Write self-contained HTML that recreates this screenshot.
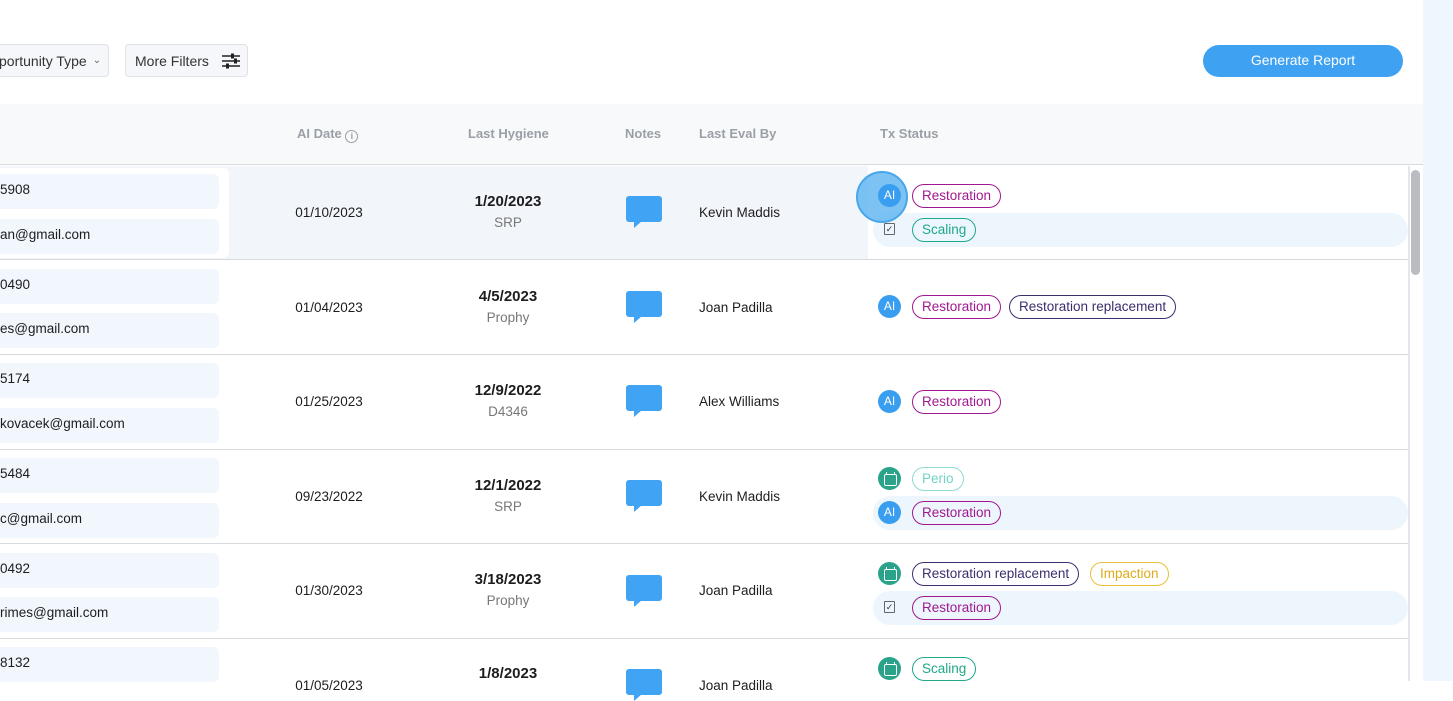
<!DOCTYPE html>
<html><head><style>
*{margin:0;padding:0;box-sizing:border-box}
body{width:1453px;height:681px;overflow:hidden;background:#fff;font-family:"Liberation Sans",sans-serif;color:#1d1d1f;position:relative}
.a{position:absolute}
.side{left:1423px;top:0;width:30px;height:681px;background:#f0f6fd}
.btn{border:1px solid #dfe3e8;border-radius:4px;background:#f5f7fa;font-size:14px;color:#333;display:flex;align-items:center}
.hdr{left:0;top:104px;width:1423px;height:61px;background:#f7f9fb;border-bottom:1px solid #d6d9dd}
.th{font-size:13px;color:#9aa0a6;font-weight:bold;top:126px}
.line{left:0;width:1408px;height:1px;background:#d6d9dd}
.cell{left:0;width:219px;height:35px;background:#f1f7fd;border-radius:0 6px 6px 0;font-size:13.5px;padding:8px 0 0 0}
.td{font-size:13.5px}
.c{text-align:center;width:120px}
.bold{font-weight:bold;font-size:15px}
.sub{font-size:13.5px;color:#777}
.pill{height:24px;border-radius:12px;border:1px solid;font-size:13.5px;padding:0 9px;line-height:22px;white-space:nowrap}
.res{color:#a0188f;border-color:#a0188f}
.rr{color:#3d2e6e;border-color:#3d2e6e}
.sc{color:#1fa88a;border-color:#1fa88a}
.pe{color:#6fd4c4;border-color:#8ddcd0}
.im{color:#e0aa1a;border-color:#e8bf3a}
.ai{width:23px;height:23px;border-radius:50%;background:#3a9ef0;color:#fff;font-size:12px;text-align:center;line-height:23px}
.cal{width:23px;height:23px;border-radius:50%;background:#2aa38a}
.cal:before{content:"";position:absolute;left:6px;top:7px;width:11px;height:10px;border:1.5px solid #fff;border-radius:2px}
.cal:after{content:"";position:absolute;left:8px;top:5px;width:7px;height:3px;border-left:1.5px solid #fff;border-right:1.5px solid #fff}
.chk{width:11px;height:12px;border:1px solid #666;border-radius:1px;font-size:9px;line-height:10px;text-align:center;color:#333}
.band{height:34px;background:#eef6fd;border-radius:17px}
.note{width:36px;height:26px;background:#40a3f4;border-radius:3px}
.note:after{content:"";position:absolute;left:8px;top:25px;border-left:0 solid transparent;border-right:8px solid transparent;border-top:7px solid #40a3f4}
</style></head><body>
<div class="a side"></div>
<div class="a btn" style="left:-2px;top:44px;width:111px;height:33px;padding-left:0">portunity Type <span style="font-size:10px;margin-left:6px;color:#666">&#8964;</span></div>
<div class="a btn" style="left:125px;top:44px;width:123px;height:33px;padding-left:9px">More Filters
<svg width="20" height="16" style="margin-left:12px" viewBox="0 0 20 16"><g stroke="#222" stroke-width="1.5"><line x1="1" y1="3" x2="19" y2="3"/><line x1="1" y1="8" x2="19" y2="8"/><line x1="1" y1="13" x2="19" y2="13"/></g><g fill="#222"><rect x="10" y="0.5" width="3" height="5"/><rect x="13" y="5.5" width="3" height="5"/><rect x="5" y="10.5" width="3" height="5"/></g></svg></div>
<div class="a" style="left:1203px;top:45px;width:200px;height:32px;border-radius:16px;background:#3ea1f2;color:#fff;font-size:14px;text-align:center;line-height:31px">Generate Report</div>
<div class="a hdr"></div>
<div class="a th" style="left:297px">AI Date <span style="display:inline-block;width:13px;height:13px;border:1px solid #9aa0a6;border-radius:50%;font-size:9px;text-align:center;line-height:11px;vertical-align:-1px">i</span></div>
<div class="a th" style="left:468px">Last Hygiene</div>
<div class="a th" style="left:625px">Notes</div>
<div class="a th" style="left:699px">Last Eval By</div>
<div class="a th" style="left:880px">Tx Status</div>
<div class="a" style="left:0;top:166px;width:868px;height:93px;background:#f2f6fa"></div>
<div class="a" style="left:0;top:168px;width:229px;height:90px;background:#fff;border-radius:0 6px 6px 0"></div>
<div class="a" style="left:1408px;top:166px;width:2px;height:515px;background:#e3e6ea"></div>
<div class="a" style="left:1411px;top:170px;width:9px;height:105px;background:#b9bcc0;border-radius:5px"></div>
<div class="a line" style="top:259px"></div><div class="a line" style="top:354px"></div><div class="a line" style="top:449px"></div><div class="a line" style="top:543px"></div><div class="a line" style="top:638px"></div>

<div class="a cell" style="top:174px">5908</div><div class="a cell" style="top:219px">an@gmail.com</div>
<div class="a td c" style="left:269px;top:205px">01/10/2023</div>
<div class="a c" style="left:448px;top:193px"><div class="bold">1/20/2023</div><div class="sub" style="margin-top:5px">SRP</div></div>
<div class="a note" style="left:626px;top:196px"></div>
<div class="a td" style="left:699px;top:205px">Kevin Maddis</div>
<div class="a band" style="left:873px;top:213px;width:535px"></div>
<div class="a" style="left:856px;top:171px;width:52px;height:52px;border-radius:50%;background:rgba(80,175,240,.75);border:2px solid #48a6ea"></div>
<div class="a ai" style="left:878px;top:184px;background:#3a9ef0">AI</div>
<div class="a pill res" style="left:912px;top:184px">Restoration</div>
<div class="a chk" style="left:884px;top:223px">&#10003;</div>
<div class="a pill sc" style="left:912px;top:218px">Scaling</div>

<div class="a cell" style="top:269px">0490</div><div class="a cell" style="top:313px">es@gmail.com</div>
<div class="a td c" style="left:269px;top:300px">01/04/2023</div>
<div class="a c" style="left:448px;top:288px"><div class="bold">4/5/2023</div><div class="sub" style="margin-top:5px">Prophy</div></div>
<div class="a note" style="left:626px;top:291px"></div>
<div class="a td" style="left:699px;top:300px">Joan Padilla</div>
<div class="a ai" style="left:878px;top:295px">AI</div>
<div class="a pill res" style="left:912px;top:295px">Restoration</div>
<div class="a pill rr" style="left:1009px;top:295px">Restoration replacement</div>

<div class="a cell" style="top:363px">5174</div><div class="a cell" style="top:408px">kovacek@gmail.com</div>
<div class="a td c" style="left:269px;top:394px">01/25/2023</div>
<div class="a c" style="left:448px;top:382px"><div class="bold">12/9/2022</div><div class="sub" style="margin-top:5px">D4346</div></div>
<div class="a note" style="left:626px;top:385px"></div>
<div class="a td" style="left:699px;top:394px">Alex Williams</div>
<div class="a ai" style="left:878px;top:390px">AI</div>
<div class="a pill res" style="left:912px;top:390px">Restoration</div>

<div class="a cell" style="top:458px">5484</div><div class="a cell" style="top:503px">c@gmail.com</div>
<div class="a td c" style="left:269px;top:489px">09/23/2022</div>
<div class="a c" style="left:448px;top:477px"><div class="bold">12/1/2022</div><div class="sub" style="margin-top:5px">SRP</div></div>
<div class="a note" style="left:626px;top:480px"></div>
<div class="a td" style="left:699px;top:489px">Kevin Maddis</div>
<div class="a band" style="left:873px;top:496px;width:535px"></div>
<div class="a cal" style="left:878px;top:467px"></div>
<div class="a pill pe" style="left:912px;top:467px">Perio</div>
<div class="a ai" style="left:878px;top:501px">AI</div>
<div class="a pill res" style="left:912px;top:501px">Restoration</div>

<div class="a cell" style="top:553px">0492</div><div class="a cell" style="top:597px">rimes@gmail.com</div>
<div class="a td c" style="left:269px;top:583px">01/30/2023</div>
<div class="a c" style="left:448px;top:571px"><div class="bold">3/18/2023</div><div class="sub" style="margin-top:5px">Prophy</div></div>
<div class="a note" style="left:626px;top:575px"></div>
<div class="a td" style="left:699px;top:583px">Joan Padilla</div>
<div class="a band" style="left:873px;top:591px;width:535px"></div>
<div class="a cal" style="left:878px;top:562px"></div>
<div class="a pill rr" style="left:912px;top:562px">Restoration replacement</div>
<div class="a pill im" style="left:1090px;top:562px">Impaction</div>
<div class="a chk" style="left:884px;top:601px">&#10003;</div>
<div class="a pill res" style="left:912px;top:596px">Restoration</div>

<div class="a cell" style="top:647px">8132</div>
<div class="a td c" style="left:269px;top:678px">01/05/2023</div>
<div class="a c" style="left:448px;top:665px"><div class="bold">1/8/2023</div></div>
<div class="a note" style="left:626px;top:669px"></div>
<div class="a td" style="left:699px;top:678px">Joan Padilla</div>
<div class="a cal" style="left:878px;top:657px"></div>
<div class="a pill sc" style="left:912px;top:657px">Scaling</div>
</body></html>
